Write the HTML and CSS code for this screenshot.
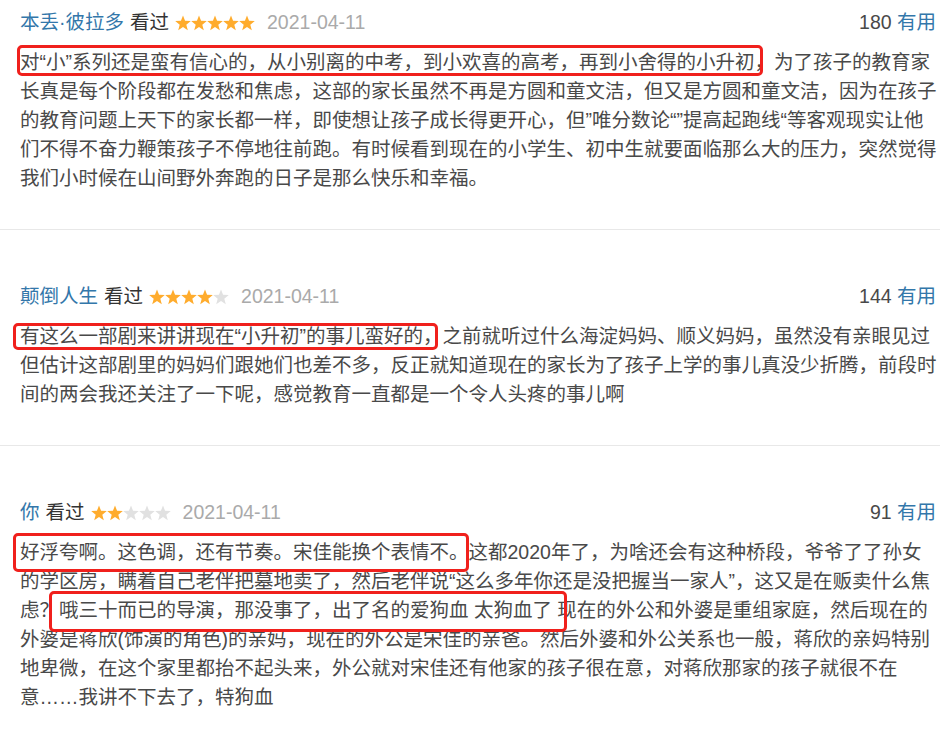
FILE: index.html
```html
<!DOCTYPE html>
<html lang="zh-CN">
<head>
  <meta charset="UTF-8" />
  <title>短评</title>
  <link rel="stylesheet" href="styles.css">
</head>
<body>
  <svg class="sprite" xmlns="http://www.w3.org/2000/svg">
    <symbol id="star" viewBox="0 0 16 16">
      <polygon points="8,0.4 10.05,5.75 15.8,6.05 11.3,9.7 12.8,15.3 8,12.1 3.2,15.3 4.7,9.7 0.2,6.05 5.95,5.75" />
    </symbol>
  </svg>

  <div class="comments">
    <div class="comment">
      <div class="comment-info">
        <a class="user">本丢·彼拉多</a>
        <span class="watched">看过</span>
        <svg class="stars" viewBox="0 0 80 16">
          <use href="#star" class="on" x="0" width="16" height="16" />
          <use href="#star" class="on" x="16" width="16" height="16" />
          <use href="#star" class="on" x="32" width="16" height="16" />
          <use href="#star" class="on" x="48" width="16" height="16" />
          <use href="#star" class="on" x="64" width="16" height="16" />
        </svg>
        <span class="time">2021-04-11</span>
        <span class="votes">180 <a>有用</a></span>
      </div>
      <p class="comment-text"><span class="mark mark-1">对“小”系列还是蛮有信心的，从小别离的中考，到小欢喜的高考，再到小舍得的小升初，</span>为了孩子的教育家长真是每个阶段都在发愁和焦虑，这部的家长虽然不再是方圆和童文洁，但又是方圆和童文洁，因为在孩子的教育问题上天下的家长都一样，即使想让孩子成长得更开心，但”唯分数论“”提高起跑线“等客观现实让他们不得不奋力鞭策孩子不停地往前跑。有时候看到现在的小学生、初中生就要面临那么大的压力，突然觉得我们小时候在山间野外奔跑的日子是那么快乐和幸福。</p>
    </div>

    <div class="comment">
      <div class="comment-info">
        <a class="user">颠倒人生</a>
        <span class="watched">看过</span>
        <svg class="stars" viewBox="0 0 80 16">
          <use href="#star" class="on" x="0" width="16" height="16" />
          <use href="#star" class="on" x="16" width="16" height="16" />
          <use href="#star" class="on" x="32" width="16" height="16" />
          <use href="#star" class="on" x="48" width="16" height="16" />
          <use href="#star" class="off" x="64" width="16" height="16" />
        </svg>
        <span class="time">2021-04-11</span>
        <span class="votes">144 <a>有用</a></span>
      </div>
      <p class="comment-text"><span class="mark mark-2">有这么一部剧来讲讲现在“小升初”的事儿蛮好的，</span>之前就听过什么海淀妈妈、顺义妈妈，虽然没有亲眼见过但估计这部剧里的妈妈们跟她们也差不多，反正就知道现在的家长为了孩子上学的事儿真没少折腾，前段时间的两会我还关注了一下呢，感觉教育一直都是一个令人头疼的事儿啊</p>
    </div>

    <div class="comment">
      <div class="comment-info">
        <a class="user">你</a>
        <span class="watched">看过</span>
        <svg class="stars" viewBox="0 0 80 16">
          <use href="#star" class="on" x="0" width="16" height="16" />
          <use href="#star" class="on" x="16" width="16" height="16" />
          <use href="#star" class="off" x="32" width="16" height="16" />
          <use href="#star" class="off" x="48" width="16" height="16" />
          <use href="#star" class="off" x="64" width="16" height="16" />
        </svg>
        <span class="time">2021-04-11</span>
        <span class="votes">91 <a>有用</a></span>
      </div>
      <p class="comment-text"><span class="mark mark-3">好浮夸啊。这色调，还有节奏。宋佳能换个表情不。</span>这都2020年了，为啥还会有这种桥段，爷爷了了孙女的学区房，瞒着自己老伴把墓地卖了，然后老伴说“这么多年你还是没把握当一家人”，这又是在贩卖什么焦虑？<span class="mark mark-4">哦三十而已的导演，那没事了，出了名的爱狗血 太狗血了</span> 现在的外公和外婆是重组家庭，然后现在的外婆是蒋欣(饰演的角色)的亲妈，现在的外公是宋佳的亲爸。然后外婆和外公关系也一般，蒋欣的亲妈特别地卑微，在这个家里都抬不起头来，外公就对宋佳还有他家的孩子很在意，对蒋欣那家的孩子就很不在意……我讲不下去了，特狗血</p>
    </div>
  </div>
</body>
</html>
```

FILE: styles.css
```css
html {
  background: #fff;
}
body {
  margin: 0;
  font-family: "Liberation Sans", "Noto Sans CJK SC", sans-serif;
  font-size: 19.5px;
  color: #494949;
}
a {
  color: #37a;
  text-decoration: none;
}
.sprite {
  position: absolute;
  width: 0;
  height: 0;
}
.comments {
  width: 940px;
}
.comment {
  padding: 52px 0 36px 20px;
  border-bottom: 1px solid #e8e8e8;
}
.comment:first-child {
  padding-top: 8px;
}
.comment:last-child {
  border-bottom: none;
}
.comment-info {
  display: flex;
  align-items: center;
  height: 29px;
  line-height: 29px;
  margin: 0 4px 11px 0;
}
.watched {
  margin-left: 6px;
  color: #333;
}
.stars {
  width: 80px;
  height: 16px;
  margin-left: 6px;
}
.stars .on {
  fill: #ffac2d;
}
.stars .off {
  fill: #e1e1e1;
}
.time {
  margin-left: 12px;
  color: #aaa;
}
.votes {
  margin-left: auto;
  color: #494949;
}
.comment-text {
  margin: 0 2px 0 0;
  line-height: 29px;
}

/* red annotation boxes drawn over the text */
.mark {
  position: relative;
}
.mark::after {
  content: "";
  position: absolute;
  border: 3px solid #f0201c;
  border-radius: 5px;
}
.mark-1::after {
  top: -6px;
  bottom: -3px;
  left: -3px;
  right: 11px;
}
.mark-2::after {
  top: -2px;
  bottom: -3px;
  left: -7px;
  right: 5px;
}
.mark-3::after {
  top: -8px;
  bottom: -9px;
  left: -7px;
  right: 0;
}
.mark-4::after {
  top: -8px;
  bottom: -11px;
  left: -10px;
  right: -15px;
}
```
